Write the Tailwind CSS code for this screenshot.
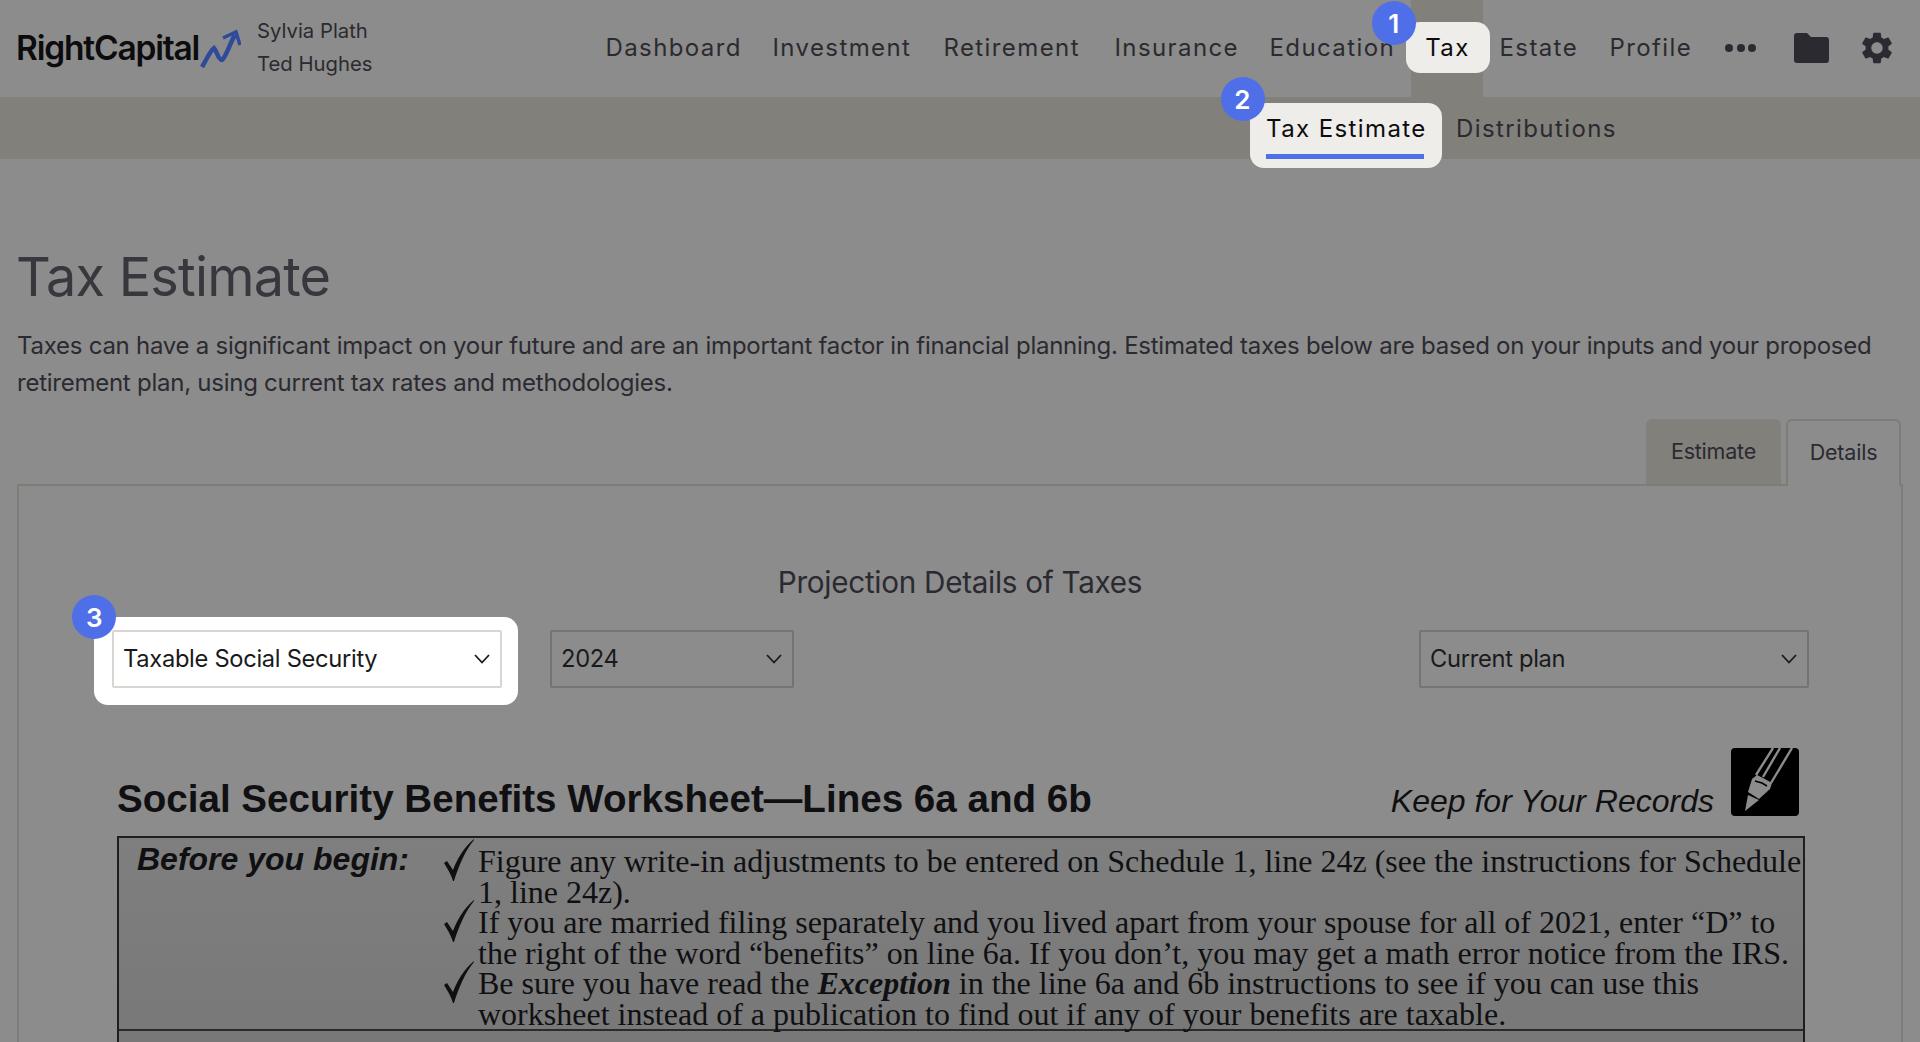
<!DOCTYPE html>
<html lang="en" class="overflow-hidden">
<head>
  <meta charset="UTF-8" />
  <title>Tax Estimate</title>
  <script src="https://cdn.jsdelivr.net/npm/@tailwindcss/browser@4"></script>
</head>
<body class="h-[1042px] overflow-hidden bg-[#8c8c8c] font-['Inter',sans-serif] text-[#2b2a30]">

  <!-- top bar -->
  <header class="flex h-[97px] items-stretch pl-[16px]">
    <div class="flex items-center">
      <span class="w-[184px] text-[33.5px] leading-none font-semibold tracking-[-1.2px] whitespace-nowrap text-[#0c0c0e]">RightCapital</span>
      <svg class="-ml-[1px] h-[40px] w-[42px]" viewBox="0 0 42 40" fill="none" stroke="#2f4a9b">
        <path d="M3 38 C8 30 11 22 15 19 C18 22 19 31 23 31 C27 28 31 14 36 6" stroke-width="4.5" />
        <path d="M24 9 L37 3 L41 16" stroke-width="3.5" />
      </svg>
      <div class="-mt-[4px] ml-[16px] text-[20.3px] leading-[33px] whitespace-nowrap">
        <div>Sylvia Plath</div>
        <div>Ted Hughes</div>
      </div>
    </div>

    <nav class="ml-[233px] flex items-center pb-[2px] text-[24px] tracking-[1.4px] whitespace-nowrap">
      <a class="w-[136px]">Dashboard</a>
      <a class="ml-[31px] w-[139px]">Investment</a>
      <a class="ml-[32px] w-[140px]">Retirement</a>
      <a class="ml-[31px] w-[123px]">Insurance</a>
      <a class="ml-[32px] w-[126px]">Education</a>
      <div class="relative ml-[16px] flex h-[97px] w-[72px] items-center justify-center self-start bg-[#81807b] pb-[2px]">
        <span class="absolute top-[22px] -left-[5px] h-[51px] w-[84px] rounded-[14px] bg-[#eeede9]"></span>
        <a class="relative text-[#0c0c0e]">Tax</a>
        <span class="absolute top-[1px] -left-[39px] flex h-[44px] w-[44px] items-center justify-center rounded-full bg-[#4f6fe8] text-[26px] font-semibold text-white">1</span>
      </div>
      <a class="ml-[16px] w-[78px]">Estate</a>
      <a class="ml-[32px] w-[82px]">Profile</a>
      <div class="ml-[34px] flex w-[32px] gap-[3.5px]">
        <span class="h-[8px] w-[8px] rounded-full bg-[#2b2a30]"></span>
        <span class="h-[8px] w-[8px] rounded-full bg-[#2b2a30]"></span>
        <span class="h-[8px] w-[8px] rounded-full bg-[#2b2a30]"></span>
      </div>
      <svg class="ml-[37px] h-[30px] w-[35px]" viewBox="0 0 35 30" fill="#2b2a30">
        <path d="M3 0 H13 L17 4 H32 a3 3 0 0 1 3 3 V27 a3 3 0 0 1 -3 3 H3 a3 3 0 0 1 -3 -3 V3 a3 3 0 0 1 3 -3 z" />
      </svg>
      <svg class="ml-[29px] h-[38px] w-[38px]" viewBox="0 0 24 24" fill="#2b2a30">
        <path d="M19.14 12.94c.04-.3.06-.61.06-.94 0-.32-.02-.64-.07-.94l2.03-1.58a.49.49 0 0 0 .12-.61l-1.92-3.32a.488.488 0 0 0-.59-.22l-2.39.96c-.5-.38-1.03-.7-1.62-.94l-.36-2.54a.484.484 0 0 0-.48-.41h-3.84c-.24 0-.43.17-.47.41l-.36 2.54c-.59.24-1.13.57-1.62.94l-2.39-.96c-.22-.08-.47 0-.59.22L2.74 8.87c-.12.21-.08.47.12.61l2.03 1.58c-.05.3-.09.63-.09.94s.02.64.07.94l-2.03 1.58a.49.49 0 0 0-.12.61l1.92 3.32c.12.22.37.29.59.22l2.39-.96c.5.38 1.03.7 1.62.94l.36 2.54c.05.24.24.41.48.41h3.84c.24 0 .44-.17.47-.41l.36-2.54c.59-.24 1.13-.56 1.62-.94l2.39.96c.22.08.47 0 .59-.22l1.92-3.32c.12-.22.07-.47-.12-.61l-2.01-1.58zM12 15.6c-1.98 0-3.6-1.62-3.6-3.6s1.62-3.6 3.6-3.6 3.6 1.62 3.6 3.6-1.62 3.6-3.6 3.6z" />
      </svg>
    </nav>
  </header>

  <!-- sub nav -->
  <div class="flex h-[62px] items-center bg-[#81807b] pt-[2px] pl-[1266px] text-[24px] tracking-[1.4px] whitespace-nowrap">
    <div class="relative w-[158px] text-[#0c0c0e]">
      <span class="absolute -top-[8px] -left-[16px] h-[65px] w-[192px] rounded-[14px] bg-[#eeede9]"></span>
      <span class="absolute top-[43px] left-0 h-[5px] w-[158px] bg-[#4f6fe8]"></span>
      <a class="relative">Tax Estimate</a>
      <span class="absolute -top-[34px] -left-[45px] flex h-[44px] w-[44px] items-center justify-center rounded-full bg-[#4f6fe8] text-[26px] font-semibold text-white">2</span>
    </div>
    <a class="ml-[32px]">Distributions</a>
  </div>

  <main class="px-[17px]">
    <h1 class="mt-[87px] -ml-[1px] text-[54px] leading-[62px] tracking-[-0.8px] text-[#38373d]">Tax Estimate</h1>
    <p class="mt-[19px] w-[1880px] text-[24px] leading-[37px] tracking-[-0.25px]">Taxes can have a significant impact on your future and are an important factor in financial planning. Estimated taxes below are based on your inputs and your proposed retirement plan, using current tax rates and methodologies.</p>

    <!-- tabs -->
    <div class="mt-[18px] flex justify-end pr-[2px] text-[21.5px] tracking-[-0.2px]">
      <div class="flex h-[65px] w-[135px] items-center justify-center rounded-t-[6px] bg-[#81807b]">Estimate</div>
      <div class="relative z-10 -mb-[2px] ml-[5px] flex h-[67px] w-[115px] items-center justify-center rounded-t-[6px] border-[2px] border-b-0 border-[#7d7c77] bg-[#8c8c8c] pb-[2px]">Details</div>
    </div>

    <!-- panel -->
    <section class="h-[600px] w-[1886px] border-[2px] border-[#7d7c77] pt-[76px]">
      <h2 class="text-center text-[29.7px] leading-[40px] tracking-[-0.3px]">Projection Details of Taxes</h2>

      <div class="mt-[28px] flex h-[58px] text-[23.7px] tracking-[-0.3px] text-[#1a1a1c]">
        <div class="relative ml-[93px] h-[58px] w-[390px]">
          <span class="absolute -top-[13px] -left-[18px] h-[88px] w-[424px] rounded-[14px] bg-white"></span>
          <div class="relative flex h-[58px] w-[390px] items-center justify-between rounded-[2px] border-[2px] border-[#d9d5d0] bg-white pr-[10px] pl-[9px]">
            Taxable Social Security
            <svg class="h-[10px] w-[16px]" viewBox="0 0 16 10" fill="none" stroke="#1a1a1c" stroke-width="1.8"><path d="M1 1 L8 8.5 L15 1" /></svg>
          </div>
          <span class="absolute -top-[35px] -left-[40px] flex h-[44px] w-[44px] items-center justify-center rounded-full bg-[#4f6fe8] text-[26px] font-semibold text-white">3</span>
        </div>
        <div class="ml-[48px] flex h-[58px] w-[244px] items-center justify-between rounded-[2px] border-[2px] border-[#757470] pr-[10px] pl-[9px]">
          2024
          <svg class="h-[10px] w-[16px]" viewBox="0 0 16 10" fill="none" stroke="#1a1a1c" stroke-width="1.8"><path d="M1 1 L8 8.5 L15 1" /></svg>
        </div>
        <div class="ml-[625px] flex h-[58px] w-[390px] items-center justify-between rounded-[2px] border-[2px] border-[#757470] pr-[10px] pl-[9px]">
          Current plan
          <svg class="h-[10px] w-[16px]" viewBox="0 0 16 10" fill="none" stroke="#1a1a1c" stroke-width="1.8"><path d="M1 1 L8 8.5 L15 1" /></svg>
        </div>
      </div>

      <!-- worksheet image -->
      <div class="mt-[68px] ml-[98px] w-[1690px] font-['Liberation_Sans',sans-serif] text-[#101012]">
        <div class="flex h-[70px] items-end pb-[1px]">
          <span class="text-[38.6px] leading-[52px] font-bold whitespace-nowrap">Social Security Benefits Worksheet—Lines 6a and 6b</span>
          <span class="mb-[1px] ml-auto text-[32px] leading-[46px] italic whitespace-nowrap">Keep for Your Records</span>
          <svg class="mr-[8px] mb-[9px] ml-[17px] h-[68px] w-[68px]" viewBox="0 0 68 68">
            <rect width="68" height="68" rx="4" fill="#000" />
            <path d="M14 63 L17 47 L28 52 z M21 31 L17 44 L28 51 L39 41 L41 35 L32 30 L26 27 z" fill="#8c8c8c" />
            <path d="M25 27 L42 0 M32 29 L49 0 M40 35 L61 0" stroke="#8c8c8c" stroke-width="2.4" />
            <path d="M24 33 L31 35 L36 38" stroke="#000" stroke-width="1.6" fill="none" />
          </svg>
        </div>
        <div class="mt-[10px] h-[300px] w-[1688px] border-[2px] border-[#1f1f22] bg-gradient-to-b from-[#7f7f7f] to-[#757575]">
          <div class="flex h-[193px] border-b-[2px] border-[#2a2a2d]">
            <span class="mt-[1px] ml-[18px] w-[307px] text-[32px] leading-[40px] font-bold italic whitespace-nowrap">Before you begin:</span>
            <div class="flex w-[30px] flex-col">
              <svg class="mt-[1px] h-[42px] w-[30px]" viewBox="0 0 30 42" fill="#101012"><path d="M0 24 L3 22 L9 31 C13 20 20 8 30 0 L30 1 C21 12 15 26 10 42 L9 42 C7 35 3 29 0 24 z" /></svg>
              <svg class="mt-[19px] h-[42px] w-[30px]" viewBox="0 0 30 42" fill="#101012"><path d="M0 24 L3 22 L9 31 C13 20 20 8 30 0 L30 1 C21 12 15 26 10 42 L9 42 C7 35 3 29 0 24 z" /></svg>
              <svg class="mt-[19px] h-[42px] w-[30px]" viewBox="0 0 30 42" fill="#101012"><path d="M0 24 L3 22 L9 31 C13 20 20 8 30 0 L30 1 C21 12 15 26 10 42 L9 42 C7 35 3 29 0 24 z" /></svg>
            </div>
            <div class="mt-[8px] ml-[4px] font-['Liberation_Serif',serif] text-[32px] leading-[30.6px] whitespace-nowrap">
              <div>Figure any write-in adjustments to be entered on Schedule 1, line 24z (see the instructions for Schedule</div>
              <div>1, line 24z).</div>
              <div>If you are married filing separately and you lived apart from your spouse for all of 2021, enter “D” to</div>
              <div>the right of the word “benefits” on line 6a. If you don’t, you may get a math error notice from the IRS.</div>
              <div>Be sure you have read the <b><i>Exception</i></b> in the line 6a and 6b instructions to see if you can use this</div>
              <div>worksheet instead of a publication to find out if any of your benefits are taxable.</div>
            </div>
          </div>
        </div>
      </div>
    </section>
  </main>
</body>
</html>
